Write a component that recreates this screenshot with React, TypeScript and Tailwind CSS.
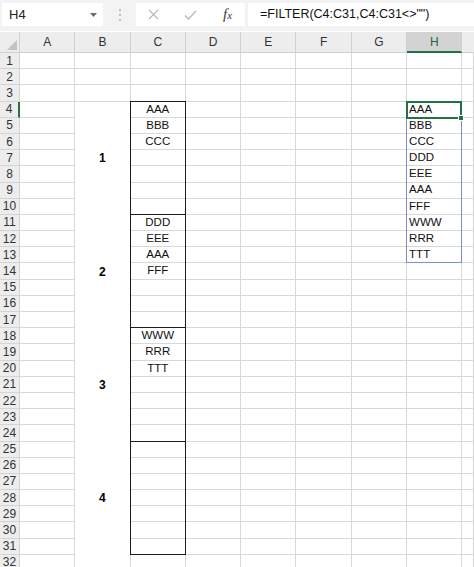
import React from "react";

const cols = ["A", "B", "C", "D", "E", "F", "G", "H"];
const rowNums = Array.from({ length: 32 }, (_, i) => i + 1);
const groups = [
  ["AAA", "BBB", "CCC"],
  ["DDD", "EEE", "AAA", "FFF"],
  ["WWW", "RRR", "TTT"],
  [],
];
const spill = ["AAA", "BBB", "CCC", "DDD", "EEE", "AAA", "FFF", "WWW", "RRR", "TTT"];

function Cell({ children, className = "" }: { children?: React.ReactNode; className?: string }) {
  return (
    <div className={`flex h-[16.2px] shrink-0 items-center border-b border-r border-[#d8d8d8] ${className}`}>
      {children}
    </div>
  );
}

function PlainCol({ count = 32, wide = false }: { count?: number; wide?: boolean }) {
  return (
    <div className={wide ? "flex min-w-0 flex-1 flex-col" : "flex w-[55.3px] shrink-0 flex-col"}>
      {Array.from({ length: count }).map((_, i) => (
        <Cell key={i} />
      ))}
    </div>
  );
}

function TopBar() {
  return (
    <div className="flex h-[31px] items-start bg-[#f3f3f3] pt-[3px]">
      <div className="ml-[2px] flex h-[23px] w-[101px] items-center justify-between bg-white pl-[7px] pr-[6px]">
        <span className="text-[13px] text-[#222]">H4</span>
        <svg width="7" height="4" viewBox="0 0 7 4">
          <path d="M0 0h7L3.5 4z" fill="#6b6b6b" />
        </svg>
      </div>
      <div className="flex w-[33px] flex-col items-center gap-[3px] pt-[6px]">
        <span className="h-[2px] w-[2px] rounded-full bg-[#b0b0b0]" />
        <span className="h-[2px] w-[2px] rounded-full bg-[#b0b0b0]" />
        <span className="h-[2px] w-[2px] rounded-full bg-[#b0b0b0]" />
      </div>
      <div className="relative flex h-[23px] w-[109px] items-center bg-white">
        <svg className="ml-[12px]" width="11" height="11" viewBox="0 0 11 11">
          <path d="M1 1l9 9M10 1l-9 9" stroke="#b8b8b8" strokeWidth="1.2" fill="none" />
        </svg>
        <svg className="ml-[25px]" width="13" height="10" viewBox="0 0 13 10">
          <path d="M1 5.5l3.5 3.5L12 1" stroke="#b8b8b8" strokeWidth="1.3" fill="none" />
        </svg>
        <span className="ml-[26px] font-['Liberation_Serif',serif] text-[15px] italic leading-none text-[#3c3c3c]">
          f<span className="text-[11px]">x</span>
        </span>
      </div>
      <div className="ml-[3px] flex h-[23px] flex-1 items-center bg-white pl-[12px]">
        <span className="text-[12.5px] text-[#111]">=FILTER(C4:C31,C4:C31&lt;&gt;"")</span>
      </div>
    </div>
  );
}

function HeaderRow() {
  return (
    <div className="mt-[1px] flex h-[21px] bg-[#ededed]">
      <div className="relative w-[20px] shrink-0 border-b border-r border-[#d0d0d0]">
        <svg className="absolute bottom-[2px] right-[2px]" width="10" height="10" viewBox="0 0 10 10">
          <path d="M10 0v10H0z" fill="#c2c2c2" />
        </svg>
      </div>
      {cols.map((c) =>
        c === "H" ? (
          <div
            key={c}
            className="flex w-[55.3px] shrink-0 items-center justify-center border-b-2 border-r border-b-[#217346] border-r-[#d0d0d0] bg-[#d3d3d3] text-[12px] text-[#2b5f3f]"
          >
            {c}
          </div>
        ) : (
          <div
            key={c}
            className="flex w-[55.3px] shrink-0 items-center justify-center border-b border-r border-[#d0d0d0] text-[12px] text-[#333]"
          >
            {c}
          </div>
        )
      )}
      <div className="flex-1 border-b border-[#d0d0d0]" />
    </div>
  );
}

function RowHeaders() {
  return (
    <div className="flex w-[20px] shrink-0 flex-col">
      {rowNums.map((n) => (
        <div
          key={n}
          className={
            n === 4
              ? "flex h-[16.2px] shrink-0 items-center justify-center border-b border-r-2 border-b-[#d4d4d4] border-r-[#217346] bg-[#ededed] text-[12px] text-[#333]"
              : "flex h-[16.2px] shrink-0 items-center justify-center border-b border-r border-[#d4d4d4] bg-[#ededed] text-[12px] text-[#333]"
          }
        >
          {n}
        </div>
      ))}
    </div>
  );
}

function ColB() {
  return (
    <div className="flex w-[55.3px] shrink-0 flex-col">
      <Cell />
      <Cell />
      <Cell />
      {["1", "2", "3", "4"].map((n) => (
        <div
          key={n}
          className="flex h-[113.4px] shrink-0 items-center justify-center border-r border-[#d8d8d8] bg-white text-[12px] font-bold text-[#000]"
        >
          {n}
        </div>
      ))}
      <Cell />
    </div>
  );
}

function ColC() {
  return (
    <div className="flex w-[55.3px] shrink-0 flex-col">
      <Cell />
      <Cell />
      <Cell />
      {groups.map((g, gi) => (
        <div key={gi} className="-ml-px -mt-px w-[calc(100%+1px)] shrink-0 border border-[#1c1c1c]">
          {Array.from({ length: 7 }).map((_, i) => (
            <div
              key={i}
              className={
                i < 6
                  ? "flex h-[16.2px] items-center justify-center border-b border-[#d8d8d8] text-[11.5px] text-[#111]"
                  : "flex h-[15.2px] items-center justify-center text-[11.5px] text-[#111]"
              }
            >
              {g[i]}
            </div>
          ))}
        </div>
      ))}
      <Cell />
    </div>
  );
}

function ColH() {
  return (
    <div className="flex w-[55.3px] shrink-0 flex-col">
      <Cell />
      <Cell />
      <Cell />
      <div className="relative -ml-px -mt-px w-[calc(100%+1px)] shrink-0 border border-[#7890d0]">
        {spill.map((t, i) => (
          <div
            key={i}
            className={
              i < 9
                ? "flex h-[16.2px] items-center border-b border-[#d8d8d8] pl-[2px] text-[11.5px] text-[#111]"
                : "flex h-[15.2px] items-center pl-[2px] text-[11.5px] text-[#111]"
            }
          >
            {t}
          </div>
        ))}
        <div className="absolute -left-px -top-px h-[18.2px] w-[calc(100%+2px)] border-2 border-[#217346]">
          <div className="absolute bottom-[-4px] right-[-4px] h-[6px] w-[6px] border border-white bg-[#217346]" />
        </div>
      </div>
      {Array.from({ length: 19 }).map((_, i) => (
        <Cell key={i} />
      ))}
    </div>
  );
}

export default function App() {
  return (
    <div className="h-[567px] w-[474px] overflow-hidden bg-white font-['Liberation_Sans',Arial,sans-serif]">
      <TopBar />
      <HeaderRow />
      <div className="flex">
        <RowHeaders />
        <PlainCol />
        <ColB />
        <ColC />
        <PlainCol />
        <PlainCol />
        <PlainCol />
        <PlainCol />
        <ColH />
        <PlainCol wide />
      </div>
    </div>
  );
}
